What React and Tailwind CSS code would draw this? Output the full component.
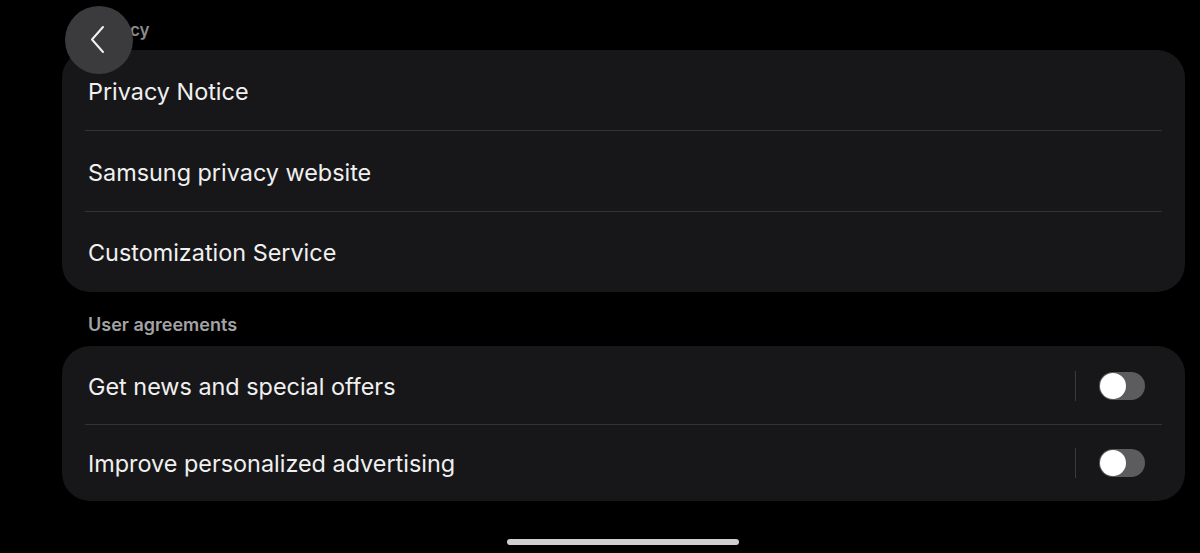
const font = { fontFamily: 'Inter, Roboto, "Noto Sans", sans-serif' }

const Row = ({ label, divider, toggle }) => (
  <div className="relative flex items-center h-full pl-[26px] pr-[40px]">
    <span className="text-[23.4px] text-[#f0f0f0] flex-1 pt-[2px]">{label}</span>
    {toggle && (
      <div className="flex items-center">
        <div className="w-px h-[30px] bg-[#3a3a3c] mr-[23px]" />
        <div className="w-[46px] h-[28px] rounded-full bg-[#5c5c5e] flex items-center px-[1px]">
          <div className="w-[26px] h-[26px] rounded-full bg-white" />
        </div>
      </div>
    )}
    {divider && <div className="absolute left-[23px] right-[23px] bottom-0 h-px bg-[#333336]" />}
  </div>
)

export default function App() {
  return (
    <div style={font} className="relative w-[1200px] h-[553px] bg-black overflow-hidden">
      <div className="pl-[62px] pr-[15px]">
        <div className="h-[50px] pl-[26px] pt-[19px] text-[17px] font-semibold text-[#8a8a8c] leading-[22px]">Privacy</div>
        <div className="bg-[#171719] rounded-[28px] grid grid-rows-[81px_81px_80px]">
          <Row label="Privacy Notice" divider />
          <Row label="Samsung privacy website" divider />
          <Row label="Customization Service" />
        </div>
        <div className="h-[54px] pl-[26px] pt-[22px] text-[18px] font-semibold text-[#a3a3a5] leading-[22px]">User agreements</div>
        <div className="bg-[#171719] rounded-[28px] grid grid-rows-[79px_76px]">
          <Row label="Get news and special offers" divider toggle />
          <Row label="Improve personalized advertising" toggle />
        </div>
      </div>

      {/* back button floating over header */}
      <button className="absolute left-[65px] top-[6px] w-[68px] h-[68px] rounded-full bg-[#3b3b3d] flex items-center justify-center">
        <svg width="24" height="30" viewBox="0 0 24 30" fill="none">
          <path d="M16 2 L5 14.5 L16 27" stroke="#f2f2f2" strokeWidth="2" strokeLinecap="round" strokeLinejoin="round" />
        </svg>
      </button>

      {/* home indicator */}
      <div className="absolute left-[507px] top-[539px] w-[232px] h-[6px] rounded-full bg-[#cfcfcf]" />
    </div>
  )
}
